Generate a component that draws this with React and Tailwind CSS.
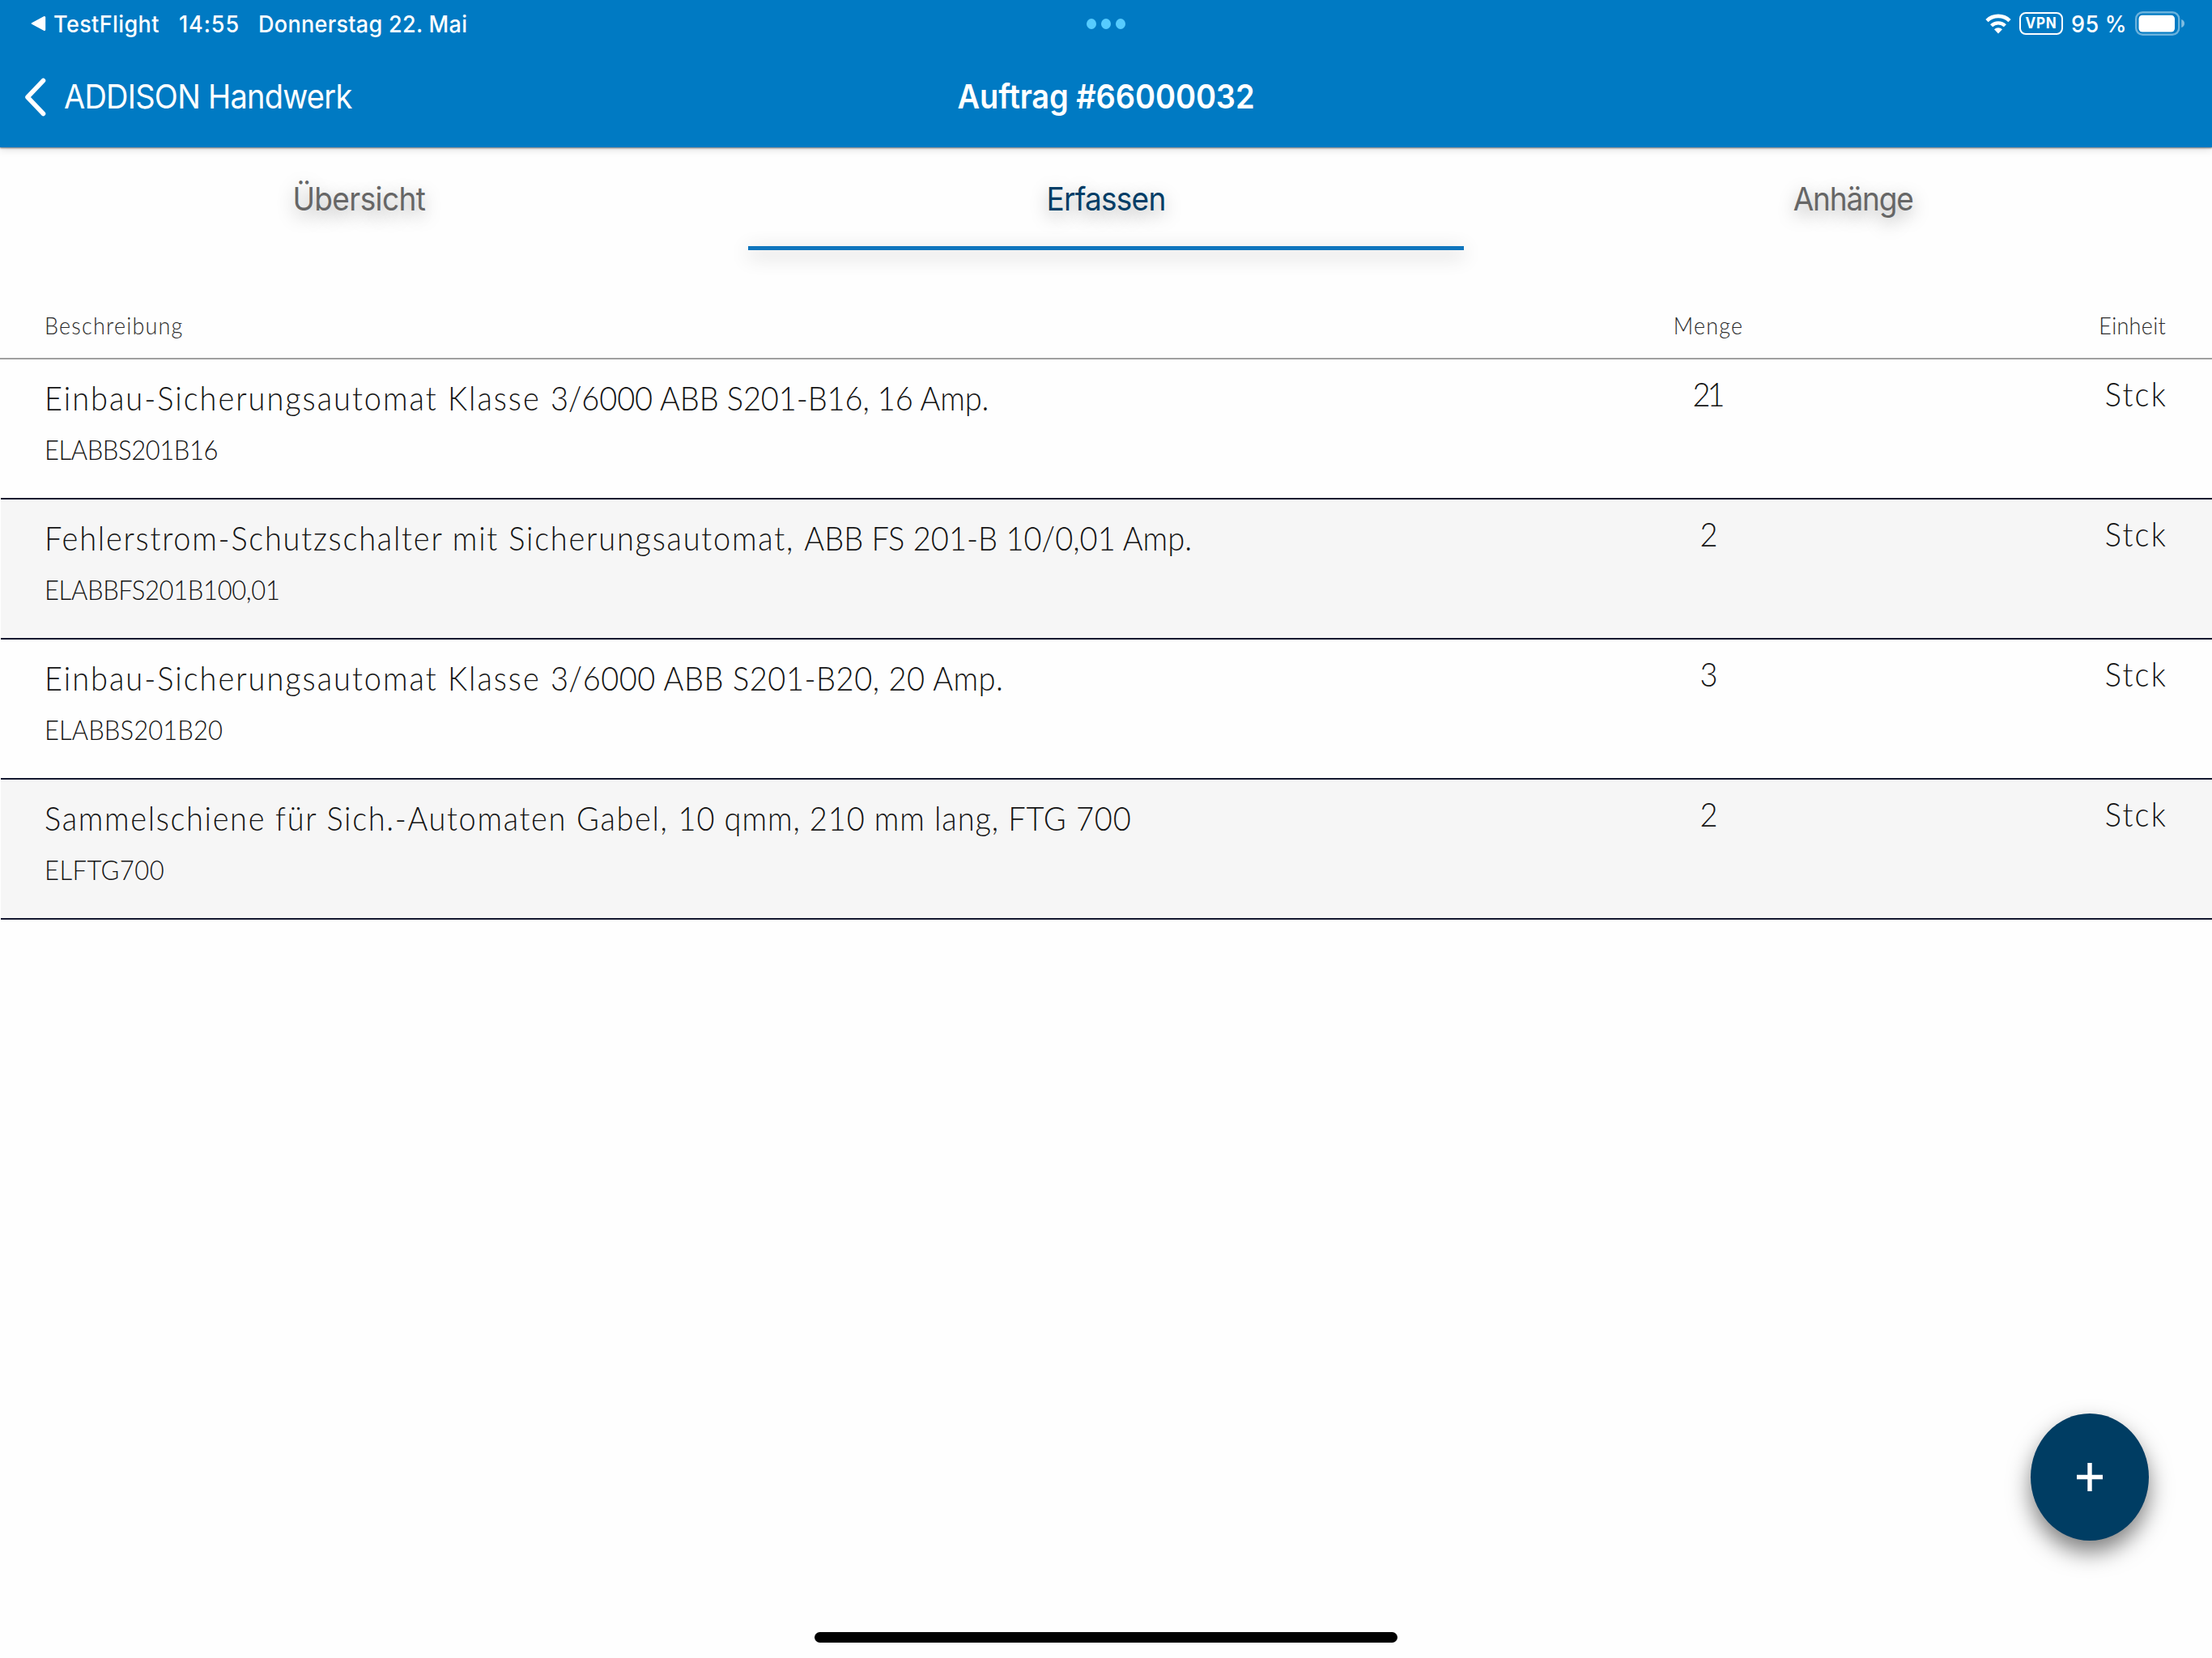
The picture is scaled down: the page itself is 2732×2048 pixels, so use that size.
import React from "react";

const tabs = [
  { id: "overview", label: "Übersicht", spacing: "tracking-[-0.6px]" },
  { id: "capture", label: "Erfassen", spacing: "tracking-[-0.75px]" },
  { id: "attachments", label: "Anhänge", spacing: "tracking-[-1.2px]" },
];

// title is split in a wide-set name and a tighter type / size part
const positions = [
  {
    name: "Einbau-Sicherungsautomat Klasse ",
    type: "3/6000 ABB S201-B16, 16 Amp.",
    code: "ELABBS201B16",
    amount: "21",
    unit: "Stck",
    nameSpacing: "tracking-[1.96px]",
    typeSpacing: "tracking-[-0.12px]",
    codeSpacing: "tracking-[-0.43px]",
  },
  {
    name: "Fehlerstrom-Schutzschalter mit Sicherungsautomat, ",
    type: "ABB FS 201-B 10/0,01 Amp.",
    code: "ELABBFS201B100,01",
    amount: "2",
    unit: "Stck",
    nameSpacing: "tracking-[1.75px]",
    typeSpacing: "tracking-[0.03px]",
    codeSpacing: "tracking-[-0.36px]",
  },
  {
    name: "Einbau-Sicherungsautomat Klasse ",
    type: "3/6000 ABB S201-B20, 20 Amp.",
    code: "ELABBS201B20",
    amount: "3",
    unit: "Stck",
    nameSpacing: "tracking-[1.96px]",
    typeSpacing: "tracking-[0.53px]",
    codeSpacing: "tracking-[0.07px]",
  },
  {
    name: "Sammelschiene für Sich.-Automaten Gabel, ",
    type: "10 qmm, 210 mm lang, FTG 700",
    code: "ELFTG700",
    amount: "2",
    unit: "Stck",
    nameSpacing: "tracking-[1.64px]",
    typeSpacing: "tracking-[0.9px]",
    codeSpacing: "tracking-[0.44px]",
  },
];

const WifiIcon = () => (
  <svg className="w-8 h-[26px]" viewBox="0 0 32 26" fill="none">
    <path d="M2 9.6a20 20 0 0 1 28 0" stroke="white" strokeWidth="4.6" />
    <path d="M7.6 15.8a12 12 0 0 1 16.8 0" stroke="white" strokeWidth="4.4" />
    <path d="M16 25.5l-5-5.2a7 7 0 0 1 10 0z" fill="white" />
  </svg>
);

const BatteryIcon = () => (
  <svg className="w-[62px] h-[30px]" viewBox="0 0 62 30">
    <rect x="1.2" y="1.2" width="53" height="27.6" rx="8" fill="none" stroke="white" strokeOpacity="0.42" strokeWidth="2.4" />
    <rect x="4.5" y="4.7" width="44.5" height="20.8" rx="4.5" fill="white" />
    <path d="M57.2 10c2.6 .8 3.8 2.6 3.8 5s-1.2 4.2-3.8 5z" fill="white" fillOpacity="0.5" />
  </svg>
);

const StatusBar = () => (
  <div className="grid grid-cols-3 items-center h-[58px] px-[33px] text-white text-[27px] font-medium leading-none">
    <div className="flex items-center pl-1 whitespace-nowrap">
      <svg className="w-5 h-5 mr-[9px]" viewBox="0 0 20 20">
        <path d="M2.2 9.2L17 1.2Q19.2 .4 19.2 2.6V17.4Q19.2 19.6 17 18.8L2.2 10.8Q.8 10 2.2 9.2z" fill="white" />
      </svg>
      <span className="inline-block scale-y-[1.07] w-[155px] tracking-[0.4px]">TestFlight</span>
      <span className="inline-block scale-y-[1.07] w-[98px] tracking-[0.9px]">14:55</span>
      <span className="inline-block scale-y-[1.07] tracking-[0.3px]">Donnerstag 22. Mai</span>
    </div>
    <div className="flex items-center justify-center gap-1.5">
      <span className="w-3 h-[13px] rounded-[50%] bg-[#56ccff]" />
      <span className="w-3 h-[13px] rounded-[50%] bg-[#56ccff]" />
      <span className="w-3 h-[13px] rounded-[50%] bg-[#56ccff]" />
    </div>
    <div className="flex items-center justify-end whitespace-nowrap">
      <WifiIcon />
      <span className="flex items-center justify-center w-[54px] h-7 ml-2.5 border-2 border-white rounded-[8px] text-[17px] font-bold tracking-[0.8px]">
        <span className="inline-block scale-y-[1.07]">VPN</span>
      </span>
      <span className="inline-block scale-y-[1.07] ml-2.5 mr-2.5 tracking-[0.3px]">95 %</span>
      <BatteryIcon />
    </div>
  </div>
);

const NavBar = () => (
  <div className="grid grid-cols-3 items-center h-[124px] pb-0.5 text-white text-[38px] leading-none">
    <button className="flex items-center pl-[30px]">
      <svg className="w-7 h-12 mr-[21px] mt-0.5" viewBox="0 0 28 48" fill="none">
        <path d="M23.5 3.5L4 24L23.5 44.5" stroke="white" strokeWidth="5.6" strokeLinecap="round" strokeLinejoin="round" />
      </svg>
      <span className="inline-block scale-y-[1.08] tracking-[-0.76px] whitespace-nowrap">ADDISON Handwerk</span>
    </button>
    <h1 className="text-center font-semibold">
      <span className="inline-block scale-y-[1.08] tracking-[-0.1px] whitespace-nowrap">Auftrag #66000032</span>
    </h1>
  </div>
);

const TabBar = ({ active }) => (
  <div className="grid grid-cols-3 gap-[38px] h-[127px] px-px">
    {tabs.map((tab) => (
      <button
        key={tab.id}
        className={
          tab.id === active
            ? "flex flex-col items-center justify-between text-[#003d66]"
            : "flex flex-col items-center justify-between text-[#666666]"
        }
      >
        <span
          className={`inline-block scale-y-[1.08] mt-[44px] text-[37px] font-[370] leading-[40px] [text-shadow:0_6px_20px_rgba(0,0,0,0.35)] ${tab.spacing}`}
        >
          {tab.label}
        </span>
        {tab.id === active && (
          <span className="w-full h-[5px] bg-[#0f75bd] shadow-[0_6px_24px_rgba(0,0,0,0.3)]" />
        )}
      </button>
    ))}
  </div>
);

const PositionTable = () => (
  <div className="font-[Lato,sans-serif] font-light text-[#141414]">
    <div className="grid grid-cols-[1926px_258px_1fr] items-center h-[135px] pt-[51px] pl-[55px] pr-[57px] border-b-2 border-[#a0a0a0] text-[27px] leading-none text-[#2b2b2b]">
      <span className="scale-y-[1.07] tracking-[1.2px]">Beschreibung</span>
      <span className="scale-y-[1.07] tracking-[1.2px] text-center">Menge</span>
      <span className="scale-y-[1.07] tracking-[0.3px] text-right">Einheit</span>
    </div>
    {positions.map((position) => (
      <div
        key={position.code}
        className="grid grid-cols-[1926px_258px_1fr] h-[173px] ml-px pl-[54px] pr-[57px] border-b-2 border-[#14182f] even:bg-[#fefefe] odd:bg-[#f6f6f6]"
      >
        <div className="flex flex-col items-start whitespace-nowrap">
          <span className="inline-block scale-y-[1.07] mt-[27px] text-[38px] leading-[40px]">
            <span className={position.nameSpacing}>{position.name}</span>
            <span className={position.typeSpacing}>{position.type}</span>
          </span>
          <span className={`inline-block scale-y-[1.07] mt-[27px] text-[31px] leading-[34px] ${position.codeSpacing}`}>
            {position.code}
          </span>
        </div>
        <span className="scale-y-[1.07] mt-[22px] mr-[3px] h-10 text-[38px] leading-[40px] tracking-[-4px] text-center">
          {position.amount}
        </span>
        <span className="scale-y-[1.07] mt-[22px] h-10 text-[38px] leading-[40px] tracking-[2.2px] text-right -mr-0.5">
          {position.unit}
        </span>
      </div>
    ))}
  </div>
);

const App = () => {
  return (
    <div className="relative w-[2732px] h-[2048px] overflow-hidden bg-[#fefefe] font-[Inter,sans-serif]">
      <header className="h-[182px] bg-[#007ac3] shadow-[0_1px_2px_rgba(0,0,0,0.5),0_2px_10px_rgba(0,0,0,0.15)]">
        <StatusBar />
        <NavBar />
      </header>
      <TabBar active="capture" />
      <PositionTable />
      <button className="absolute left-[2508px] top-[1746px] flex items-center justify-center w-[146px] h-[157px] rounded-[50%] bg-[#003d63] shadow-[0_14px_28px_rgba(0,0,0,0.5)]">
        <svg className="w-8 h-[35px]" viewBox="0 0 32 35">
          <path d="M0 17.5H32M16 0V35" stroke="white" strokeWidth="5.4" />
        </svg>
      </button>
      <div className="absolute left-[1006px] top-[2016px] w-[720px] h-[13px] rounded-full bg-black" />
    </div>
  );
};

export default App;
